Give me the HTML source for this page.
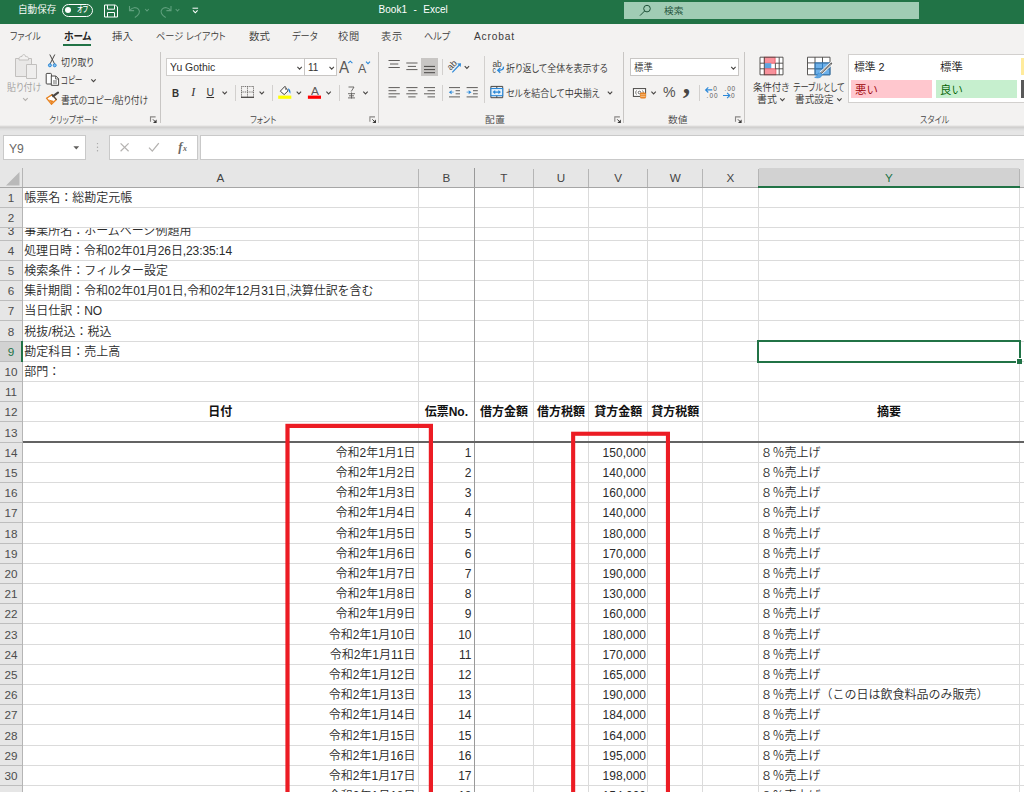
<!DOCTYPE html>
<html lang="ja"><head><meta charset="utf-8"><title>Book1 - Excel</title>
<style>
html,body{margin:0;padding:0}
body{width:1024px;height:792px;overflow:hidden;position:relative;background:#fff;font-family:"Liberation Sans","Noto Sans CJK JP",sans-serif;}
.a{position:absolute}
.t{position:absolute;white-space:nowrap}
.u{font-feature-settings:"palt"}
.g{font-family:"Liberation Sans","Noto Sans CJK JP",sans-serif}
svg{position:absolute;overflow:visible}
</style></head><body>

<div class="a" style="left:0px;top:0px;width:1024px;height:24px;background:#217346;"></div>
<div class="t u" style="left:18.00px;top:2.30px;line-height:16px;font-size:9.7px;color:#fff;font-weight:350;transform:scaleX(0.9884);transform-origin:0 50%;">自動保存</div>
<div class="a" style="left:62px;top:3.5px;width:29px;height:11px;border:1px solid #fff;border-radius:7px"></div>
<div class="a" style="left:65.4px;top:6.8px;width:5.8px;height:5.8px;border-radius:3px;background:#fff"></div>
<div class="t u" style="left:77.30px;top:2.20px;line-height:16px;font-size:8px;color:#fff;font-weight:500;transform:scaleX(0.7689);transform-origin:0 50%;">オフ</div>
<div class="t u" style="top:2.20px;line-height:16px;font-size:10px;color:#fff;left:378.60px;word-spacing:3.7px;">Book1 - Excel</div>
<div class="a" style="left:624px;top:2px;width:295px;height:17px;background:#a0ccb4;"></div>
<div class="t u" style="left:663.50px;top:3.00px;line-height:16px;font-size:9.3px;color:#1f5138;font-weight:350;transform:scaleX(1.0371);transform-origin:0 50%;">検索</div>
<div class="a" style="left:0px;top:24px;width:1024px;height:102px;background:#f3f2f1;"></div>
<div class="t u" style="left:10.00px;top:29.30px;line-height:16px;font-size:10.2px;color:#3b3a39;font-weight:350;transform:scaleX(0.8730);transform-origin:0 50%;">ファイル</div>
<div class="t u" style="left:112.00px;top:29.30px;line-height:16px;font-size:10.2px;color:#3b3a39;font-weight:350;transform:scaleX(1.0209);transform-origin:0 50%;">挿入</div>
<div class="t u" style="left:156.00px;top:29.30px;line-height:16px;font-size:10.2px;color:#3b3a39;font-weight:350;transform:scaleX(0.9012);transform-origin:0 50%;">ページ レイアウト</div>
<div class="t u" style="left:249.00px;top:29.30px;line-height:16px;font-size:10.2px;color:#3b3a39;font-weight:350;transform:scaleX(1.0209);transform-origin:0 50%;">数式</div>
<div class="t u" style="left:291.50px;top:29.30px;line-height:16px;font-size:10.2px;color:#3b3a39;font-weight:350;transform:scaleX(0.9022);transform-origin:0 50%;">データ</div>
<div class="t u" style="left:338.00px;top:29.30px;line-height:16px;font-size:10.2px;color:#3b3a39;font-weight:350;letter-spacing:0.713px;">校閲</div>
<div class="t u" style="left:381.00px;top:29.30px;line-height:16px;font-size:10.2px;color:#3b3a39;font-weight:350;letter-spacing:0.713px;">表示</div>
<div class="t u" style="left:424.00px;top:29.30px;line-height:16px;font-size:10.2px;color:#3b3a39;font-weight:350;transform:scaleX(0.8996);transform-origin:0 50%;">ヘルプ</div>
<div class="t u" style="left:474.00px;top:29.30px;line-height:16px;font-size:10.2px;color:#3b3a39;font-weight:350;letter-spacing:0.813px;">Acrobat</div>
<div class="t u" style="left:63.70px;top:29.30px;line-height:16px;font-size:10.2px;color:#252423;font-weight:700;transform:scaleX(0.9423);transform-origin:0 50%;">ホーム</div>
<div class="a" style="left:63px;top:44px;width:28px;height:2px;background:#217346;"></div>
<div class="a" style="left:0px;top:128px;width:1024px;height:40px;background:#e6e6e6;"></div>
<div class="a" style="left:0px;top:125px;width:1024px;height:1px;background:#eae9e8;"></div>
<div class="a" style="left:0px;top:126px;width:1024px;height:1px;background:#d9d8d7;"></div>
<div class="a" style="left:0px;top:127px;width:1024px;height:1px;background:#d1d0cf;"></div>
<div class="a" style="left:0px;top:128px;width:1024px;height:1px;background:#d8d8d8;"></div>
<div class="a" style="left:0px;top:129px;width:1024px;height:1px;background:#dfdfdf;"></div>
<div class="a" style="left:0px;top:130px;width:1024px;height:1px;background:#e3e3e3;"></div>
<div class="a" style="left:159.5px;top:52px;width:1px;height:71px;background:#c8c6c4;"></div>
<div class="a" style="left:378.0px;top:52px;width:1px;height:71px;background:#c8c6c4;"></div>
<div class="a" style="left:623.0px;top:52px;width:1px;height:71px;background:#c8c6c4;"></div>
<div class="a" style="left:744.0px;top:52px;width:1px;height:71px;background:#c8c6c4;"></div>
<div class="a" style="left:235.0px;top:85px;width:1px;height:16px;background:#d2d0ce;"></div>
<div class="a" style="left:272.0px;top:85px;width:1px;height:16px;background:#d2d0ce;"></div>
<div class="a" style="left:338.5px;top:85px;width:1px;height:16px;background:#d2d0ce;"></div>
<div class="a" style="left:442.0px;top:59px;width:1px;height:16px;background:#d2d0ce;"></div>
<div class="a" style="left:442.0px;top:85px;width:1px;height:16px;background:#d2d0ce;"></div>
<div class="a" style="left:484.0px;top:56px;width:1px;height:47px;background:#d2d0ce;"></div>
<div class="a" style="left:699.0px;top:85px;width:1px;height:16px;background:#d2d0ce;"></div>
<div class="t u" style="left:7.30px;top:80.10px;line-height:16px;font-size:9.8px;color:#a19f9d;font-weight:350;transform:scaleX(0.9246);transform-origin:0 50%;">貼り付け</div>
<div class="t u" style="left:61.40px;top:54.50px;line-height:16px;font-size:9.8px;color:#323130;font-weight:350;transform:scaleX(0.9135);transform-origin:0 50%;">切り取り</div>
<div class="t u" style="left:61.30px;top:73.20px;line-height:16px;font-size:9.8px;color:#323130;font-weight:350;transform:scaleX(0.7657);transform-origin:0 50%;">コピー</div>
<div class="t u" style="left:61.30px;top:93.10px;line-height:16px;font-size:9.8px;color:#323130;font-weight:350;transform:scaleX(0.8975);transform-origin:0 50%;">書式のコピー/貼り付け</div>
<div class="t u" style="left:49.20px;top:111.90px;line-height:16px;font-size:9.6px;color:#444;font-weight:350;transform:scaleX(0.8249);transform-origin:0 50%;">クリップボード</div>
<div class="a" style="left:166px;top:58px;width:137px;height:16px;background:#fff;border:1px solid #cfcdcb"></div>
<div class="a" style="left:304px;top:58px;width:31px;height:16px;background:#fff;border:1px solid #c8c6c4"></div>
<div class="t u" style="left:169.50px;top:60.30px;line-height:16px;font-size:10.2px;color:#323130;font-weight:350;transform:scaleX(1.0255);transform-origin:0 50%;">Yu Gothic</div>
<div class="t u" style="left:308.00px;top:60.30px;line-height:16px;font-size:10.2px;color:#323130;font-weight:350;transform:scaleX(0.9737);transform-origin:0 50%;">11</div>
<div class="t u" style="left:250.00px;top:111.90px;line-height:16px;font-size:9.6px;color:#444;font-weight:350;transform:scaleX(0.8374);transform-origin:0 50%;">フォント</div>
<div class="t u" style="left:172.00px;top:84.70px;line-height:16px;font-size:11px;color:#323130;font-weight:700;transform:scaleX(0.8927);transform-origin:0 50%;">B</div>
<div class="t u" style="top:83.70px;line-height:16px;font-size:12px;color:#323130;left:43.20px;width:300px;text-align:center;font-style:italic;font-family:'Liberation Serif',serif;">I</div>
<div class="t u" style="top:84.00px;line-height:16px;font-size:10.5px;color:#323130;left:60.30px;width:300px;text-align:center;text-decoration:underline;">U</div>
<div class="t u" style="left:339.40px;top:59.90px;line-height:16px;font-size:15.7px;color:#5a5856;font-weight:350;transform:scaleX(0.9648);transform-origin:0 50%;">A</div>
<div class="t u" style="left:358.00px;top:61.00px;line-height:16px;font-size:12.6px;color:#5a5856;font-weight:350;transform:scaleX(0.9874);transform-origin:0 50%;">A</div>
<div class="t u" style="left:310.80px;top:83.10px;line-height:16px;font-size:11.4px;color:#5c5a58;font-weight:350;transform:scaleX(1.0382);transform-origin:0 50%;">A</div>
<div class="a" style="left:421px;top:58px;width:17px;height:18px;background:#c8c6c4;"></div>
<div class="t u" style="left:506.00px;top:60.50px;line-height:16px;font-size:9.8px;color:#323130;font-weight:350;transform:scaleX(0.9202);transform-origin:0 50%;">折り返して全体を表示する</div>
<div class="t u" style="left:506.00px;top:85.70px;line-height:16px;font-size:9.8px;color:#323130;font-weight:350;transform:scaleX(0.9161);transform-origin:0 50%;">セルを結合して中央揃え</div>
<div class="t u" style="left:485.00px;top:111.90px;line-height:16px;font-size:9.6px;color:#444;font-weight:350;letter-spacing:0.556px;">配置</div>
<div class="a" style="left:630px;top:58px;width:107px;height:16px;background:#fff;border:1px solid #c8c6c4"></div>
<div class="t u" style="left:634.00px;top:59.70px;line-height:16px;font-size:9.8px;color:#323130;font-weight:350;transform:scaleX(0.9595);transform-origin:0 50%;">標準</div>
<div class="t u" style="left:662.50px;top:84.30px;line-height:16px;font-size:15.5px;color:#555351;font-weight:350;transform:scaleX(0.9133);transform-origin:0 50%;">%</div>
<div class="t u" style="left:667.75px;top:111.90px;line-height:16px;font-size:9.6px;color:#444;font-weight:350;transform:scaleX(1.0189);transform-origin:0 50%;">数値</div>
<div class="t u" style="left:752.90px;top:79.90px;line-height:16px;font-size:9.8px;color:#323130;font-weight:350;transform:scaleX(0.9617);transform-origin:0 50%;">条件付き</div>
<div class="t u" style="left:757.00px;top:92.20px;line-height:16px;font-size:9.8px;color:#323130;font-weight:350;transform:scaleX(1.0105);transform-origin:0 50%;">書式</div>
<div class="t u" style="left:793.20px;top:79.90px;line-height:16px;font-size:9.8px;color:#323130;font-weight:350;transform:scaleX(0.8412);transform-origin:0 50%;">テーブルとして</div>
<div class="t u" style="left:795.00px;top:92.20px;line-height:16px;font-size:9.8px;color:#323130;font-weight:350;transform:scaleX(0.9850);transform-origin:0 50%;">書式設定</div>
<div class="a" style="left:848px;top:54px;width:178px;height:47px;background:#fff;border:1px solid #d2d0ce"></div>
<div class="t g" style="left:854.00px;top:58.70px;line-height:16px;font-size:11.2px;color:#1a1a1a;font-weight:350;transform:scaleX(0.9608);transform-origin:0 50%;">標準 2</div>
<div class="t g" style="left:940.00px;top:58.70px;line-height:16px;font-size:11.2px;color:#1a1a1a;font-weight:350;transform:scaleX(1.0183);transform-origin:0 50%;">標準</div>
<div class="a" style="left:851px;top:80px;width:81px;height:18px;background:#ffc7ce;"></div>
<div class="a" style="left:936px;top:80px;width:81px;height:18px;background:#c6efce;"></div>
<div class="a" style="left:1021px;top:58px;width:3px;height:17px;background:#ffeb9c;"></div>
<div class="a" style="left:1021px;top:80px;width:3px;height:18px;background:#595959;"></div>
<div class="t g" style="left:855.00px;top:82.00px;line-height:16px;font-size:11.2px;color:#9c0006;font-weight:350;transform:scaleX(1.0183);transform-origin:0 50%;">悪い</div>
<div class="t g" style="left:940.00px;top:82.00px;line-height:16px;font-size:11.2px;color:#006100;font-weight:350;transform:scaleX(1.0183);transform-origin:0 50%;">良い</div>
<div class="t u" style="left:920.00px;top:111.90px;line-height:16px;font-size:9.6px;color:#444;font-weight:350;transform:scaleX(0.8504);transform-origin:0 50%;">スタイル</div>
<div class="a" style="left:3px;top:135px;width:81px;height:23px;background:#fff;border:1px solid #c9c9c9"></div>
<div class="t u" style="left:8.90px;top:141.10px;line-height:16px;font-size:12.6px;color:#6a6866;font-weight:350;transform:scaleX(0.9671);transform-origin:0 50%;">Y9</div>
<div class="a" style="left:109px;top:135px;width:87px;height:23px;background:#fff;border:1px solid #c9c9c9"></div>
<div class="a" style="left:200px;top:135px;width:828px;height:23px;background:#fff;border:1px solid #c9c9c9"></div>
<svg style="left:0;top:0" width="1024" height="170" viewBox="0 0 1024 170"><g fill="none" stroke="#fff" stroke-width="1"><path d="M104.5 5h11l2 2v10h-13z"/><path d="M107.5 5.2v4h7v-4M107.5 17v-4.5h7v4.5"/></g><g fill="none" stroke="#5f9f7d" stroke-width="1.1"><path d="M129.5 6v4.6h4.6"/><path d="M129.8 10.4c2.2-3.2 6.4-3.6 8.6-1.2c2.6 2.8 0.2 6-3.6 8.2"/><path d="M171 6v4.6h-4.6"/><path d="M170.7 10.4c-2.2-3.2-6.4-3.6-8.600-1.2c-2.6 2.8-0.2 6 3.600 8.200"/></g><path d="M145.20 9.00L147.00 11.00L148.80 9.00" fill="none" stroke="#5f9f7d" stroke-width="1.1"/><path d="M175.70 9.00L177.50 11.00L179.30 9.00" fill="none" stroke="#5f9f7d" stroke-width="1.1"/><path d="M192.500 8.200h5.600" stroke="#fff" stroke-width="1"/><path d="M193.00 10.40L195.30 12.80L197.60 10.40" fill="none" stroke="#fff" stroke-width="1.1"/><g fill="none" stroke="#1f5138" stroke-width="1"><circle cx="647" cy="8.600" r="3.300"/><path d="M644.600 11l-4.600 4.600"/></g><g stroke="#c2c0be" stroke-width="1" fill="#e9e8e7"><path d="M15.500 58.500h16v18h-16z"/><path d="M19 58.500c0-1.500 1.500-2 3-2c0-2.500 3.500-2.500 3.500 0c1.500 0 3 0.500 3 2v1.500h-9.500z" fill="#f3f2f1"/><path d="M26.500 64.500h10v14h-10z" fill="#efeeed"/></g><path d="M23.10 98.05L25.40 100.35L27.70 98.05" fill="none" stroke="#b3b0ad" stroke-width="1.1"/><g fill="none" stroke="#484644" stroke-width="1"><path d="M49.800 54.500L54.600 64M54.800 54.500L50 64"/></g><circle cx="49.900" cy="65.300" r="1.500" fill="#8cc4ee" stroke="#2b88d8" stroke-width="1"/><circle cx="54.700" cy="65.300" r="1.500" fill="#8cc4ee" stroke="#2b88d8" stroke-width="1"/><g fill="#fff" stroke="#484644" stroke-width="1"><path d="M51.500 84h-4.500q-0.800 0-0.800-0.800v-9q0-0.800 0.800-0.800h3.600q0.800 0 0.800 0.800v2"/><path d="M51.300 76h4.500l2.800 2.800v6.500h-7.300z"/><path d="M55.600 76v3h3M53 81h4M53 83h4" fill="none" stroke-width="0.800"/></g><path d="M91.30 79.45L93.50 81.75L95.70 79.45" fill="none" stroke="#484644" stroke-width="1.1"/><path d="M46.500 98.200L52.200 94.600L56.400 99.600L51.400 104.200Z" fill="#fff" stroke="#e8821e" stroke-width="1.300" stroke-linejoin="round"/><path d="M48.500 99.500L51.600 103.200L54 101Z" fill="#e8821e"/><path d="M53.200 96.200L58 92.700" stroke="#484644" stroke-width="2.200" stroke-linecap="round"/><path d="M51.800 94.300L56.600 99.800" stroke="#484644" stroke-width="1.200"/><path d="M150.50 121.80V116.90H155.60" fill="none" stroke="#8a8886" stroke-width="1.1"/><path d="M153.00 119.40L155.40 121.80" fill="none" stroke="#3b3a39" stroke-width="1"/><path d="M156.60 119.40V123.00H153.00Z" fill="#3b3a39"/><path d="M297.40 66.85L299.60 69.15L301.80 66.85" fill="none" stroke="#484644" stroke-width="1.1"/><path d="M329.50 66.85L331.70 69.15L333.90 66.85" fill="none" stroke="#484644" stroke-width="1.1"/><path d="M348.200 63.200l2.100-2l2.100 2" fill="none" stroke="#2b88d8" stroke-width="1.100"/><path d="M366 61.700l2 2l2-2" fill="none" stroke="#2b88d8" stroke-width="1.100"/><path d="M222.50 91.55L224.70 93.85L226.90 91.55" fill="none" stroke="#484644" stroke-width="1.1"/><g stroke="#6a6866" stroke-width="1" stroke-dasharray="1 0.800" fill="none"><path d="M241.500 86.500h12M241.500 86.500v11M253.500 86.500v11M247.500 86.500v11M241.500 92h12"/></g><path d="M241 97.300h13" stroke="#484644" stroke-width="1.300"/><path d="M259.60 91.55L261.80 93.85L264.00 91.55" fill="none" stroke="#484644" stroke-width="1.1"/><path d="M280.300 91.200L284.900 86.300L288 90.900L284.200 94.600Z" fill="#fff" stroke="#484644" stroke-width="1" stroke-linejoin="round"/><path d="M285 86.400L286 90" stroke="#8a8886" stroke-width="1.300" fill="none"/><path d="M287.800 88.300C290 88.800 290.900 91 290.300 93.800C289.300 92.600 288.800 91.400 287.800 88.300Z" fill="#1e7fd0"/><rect x="278.200" y="95.600" width="13.100" height="3.200" fill="#ffff00"/><path d="M296.70 91.55L298.90 93.85L301.10 91.55" fill="none" stroke="#484644" stroke-width="1.1"/><rect x="307.900" y="95.600" width="13.100" height="3.200" fill="#ff0000"/><path d="M326.40 91.55L328.60 93.85L330.80 91.55" fill="none" stroke="#484644" stroke-width="1.1"/><g fill="none" stroke="#605e5c" stroke-width="0.900"><path d="M348.500 87h5.500l-2.800 4.500M351 88.500v0"/><path d="M348 93.700h7M349 95.800h5M348 97.900h7M351.500 92.500v6"/></g><path d="M363.30 91.55L365.50 93.85L367.70 91.55" fill="none" stroke="#484644" stroke-width="1.1"/><path d="M369.90 121.80V116.90H375.00" fill="none" stroke="#8a8886" stroke-width="1.1"/><path d="M372.40 119.40L374.80 121.80" fill="none" stroke="#3b3a39" stroke-width="1"/><path d="M376.00 119.40V123.00H372.40Z" fill="#3b3a39"/><path d="M388.50 60.50H399.80" stroke="#605e5c" stroke-width="1.0" fill="none"/><path d="M390.00 64.00H398.30" stroke="#605e5c" stroke-width="1.0" fill="none"/><path d="M388.50 67.50H399.80" stroke="#605e5c" stroke-width="1.0" fill="none"/><path d="M406.30 63.00H417.50" stroke="#605e5c" stroke-width="1.0" fill="none"/><path d="M407.80 66.40H416.00" stroke="#605e5c" stroke-width="1.0" fill="none"/><path d="M406.30 69.60H417.50" stroke="#605e5c" stroke-width="1.0" fill="none"/><path d="M424.00 66.40H435.00" stroke="#484644" stroke-width="1.0" fill="none"/><path d="M424.00 69.60H435.00" stroke="#484644" stroke-width="1.0" fill="none"/><path d="M424.00 72.70H435.00" stroke="#484644" stroke-width="1.0" fill="none"/><path d="M388.50 87.60H399.80" stroke="#605e5c" stroke-width="1.0" fill="none"/><path d="M406.30 87.60H417.50" stroke="#605e5c" stroke-width="1.0" fill="none"/><path d="M424.00 87.60H435.00" stroke="#605e5c" stroke-width="1.0" fill="none"/><path d="M449.00 87.60H460.00" stroke="#605e5c" stroke-width="1.0" fill="none"/><path d="M466.60 87.60H477.80" stroke="#605e5c" stroke-width="1.0" fill="none"/><path d="M388.50 90.70H396.30" stroke="#605e5c" stroke-width="1.0" fill="none"/><path d="M408.20 90.70H415.60" stroke="#605e5c" stroke-width="1.0" fill="none"/><path d="M427.50 90.70H435.00" stroke="#605e5c" stroke-width="1.0" fill="none"/><path d="M455.60 90.70H460.00" stroke="#605e5c" stroke-width="1.0" fill="none"/><path d="M473.00 90.70H477.80" stroke="#605e5c" stroke-width="1.0" fill="none"/><path d="M388.50 93.80H399.80" stroke="#605e5c" stroke-width="1.0" fill="none"/><path d="M406.30 93.80H417.50" stroke="#605e5c" stroke-width="1.0" fill="none"/><path d="M424.00 93.80H435.00" stroke="#605e5c" stroke-width="1.0" fill="none"/><path d="M455.60 93.80H460.00" stroke="#605e5c" stroke-width="1.0" fill="none"/><path d="M473.00 93.80H477.80" stroke="#605e5c" stroke-width="1.0" fill="none"/><path d="M388.50 96.90H396.30" stroke="#605e5c" stroke-width="1.0" fill="none"/><path d="M408.20 96.90H415.60" stroke="#605e5c" stroke-width="1.0" fill="none"/><path d="M427.50 96.90H435.00" stroke="#605e5c" stroke-width="1.0" fill="none"/><path d="M449.00 96.90H460.00" stroke="#605e5c" stroke-width="1.0" fill="none"/><path d="M466.60 96.90H477.80" stroke="#605e5c" stroke-width="1.0" fill="none"/><path d="M448.800 92.150l2.900-2v4z" fill="#2b88d8"/><path d="M451.500 92.150h2.200" stroke="#7db8ea" stroke-width="1.200"/><path d="M471.500 92.150l-2.900-2v4z" fill="#2b88d8"/><path d="M466.600 92.150h2.200" stroke="#7db8ea" stroke-width="1.200"/><path d="M452.300 72.300L459.800 64.500" fill="none" stroke="#2b88d8" stroke-width="1.200"/><path d="M461 63.300l-0.300 3.800l-3.500-3.500z" fill="#2b88d8"/><text x="0" y="0" transform="translate(450.500 70.800) rotate(-45)" font-size="9" fill="#484644" font-family="Liberation Sans, sans-serif">ab</text><path d="M464.70 66.05L466.90 68.35L469.10 66.05" fill="none" stroke="#484644" stroke-width="1.1"/><text x="492.400" y="66.500" font-size="8.600" fill="#484644" font-family="Liberation Sans, sans-serif" textLength="9.400" lengthAdjust="spacingAndGlyphs">ab</text><text x="492.400" y="72.600" font-size="8.600" fill="#484644" font-family="Liberation Sans, sans-serif" textLength="3.400" lengthAdjust="spacingAndGlyphs">c</text><path d="M503.500 66.600c0.300 2.700-1.600 3.700-5.200 3.700" fill="none" stroke="#2b88d8" stroke-width="1.400"/><path d="M500.300 67.900l-2.600 2.400l2.600 2.400" fill="none" stroke="#2b88d8" stroke-width="1.300"/><path d="M490.900 86.400h11.800v11.300h-11.800zM496.800 86.400v11.300" fill="none" stroke="#484644" stroke-width="1"/><rect x="490.900" y="88.500" width="11.800" height="7.200" fill="#e4f1fb" stroke="#2b88d8" stroke-width="1.100"/><path d="M494.500 92.100h4.600" stroke="#2b88d8" stroke-width="1.300" fill="none"/><path d="M492.600 92.100l2.600-2.100v4.200zM501 92.100l-2.600-2.100v4.200z" fill="#2b88d8"/><path d="M607.80 91.55L610.00 93.85L612.20 91.55" fill="none" stroke="#484644" stroke-width="1.1"/><path d="M614.80 121.80V116.90H619.90" fill="none" stroke="#8a8886" stroke-width="1.1"/><path d="M617.30 119.40L619.70 121.80" fill="none" stroke="#3b3a39" stroke-width="1"/><path d="M620.90 119.40V123.00H617.30Z" fill="#3b3a39"/><path d="M731.20 66.85L733.40 69.15L735.60 66.85" fill="none" stroke="#484644" stroke-width="1.1"/><rect x="633.400" y="88.600" width="12.200" height="7.800" fill="#fff" stroke="#484644" stroke-width="1"/><path d="M636.500 90.500c-1 1.200-1 2.800 0 4M642.500 90.500c1 1.200 1 2.800 0 4" stroke="#484644" stroke-width="0.800" fill="none"/><circle cx="639.500" cy="92.500" r="1.300" fill="none" stroke="#484644" stroke-width="0.800"/><rect x="640" y="92.600" width="6" height="6" rx="1.500" fill="#e8821e"/><path d="M640.500 94.800h5M640.500 96.600h5" stroke="#fbd9b5" stroke-width="0.700"/><path d="M651.40 91.55L653.60 93.85L655.80 91.55" fill="none" stroke="#484644" stroke-width="1.1"/><text x="682.800" y="92.800" font-size="30" font-weight="700" fill="#484644" font-family="Liberation Serif, serif">,</text><path d="M705.500 89.900h6.800M708.300 87.300l-2.700 2.600l2.700 2.600" fill="none" stroke="#2b88d8" stroke-width="1.100"/><text x="713.200" y="91.200" font-size="6.500" fill="#605e5c" font-family="Liberation Sans, sans-serif">0</text><text x="706.600" y="97.900" font-size="6.500" fill="#605e5c" font-family="Liberation Sans, sans-serif" textLength="11">.00</text><path d="M723 95.500h6.800M727.100 92.900l2.700 2.600l-2.700 2.600" fill="none" stroke="#2b88d8" stroke-width="1.100"/><text x="724.600" y="91.200" font-size="6.500" fill="#605e5c" font-family="Liberation Sans, sans-serif" textLength="10.500">.00</text><text x="729.300" y="97.900" font-size="6.500" fill="#605e5c" font-family="Liberation Sans, sans-serif">.0</text><path d="M735.50 121.80V116.90H740.60" fill="none" stroke="#8a8886" stroke-width="1.1"/><path d="M738.00 119.40L740.40 121.80" fill="none" stroke="#3b3a39" stroke-width="1"/><path d="M741.60 119.40V123.00H738.00Z" fill="#3b3a39"/><rect x="760" y="57.200" width="23" height="17.600" fill="#fff"/><rect x="764.300" y="57.200" width="10.800" height="6" fill="#f8919b" stroke="#e8505c" stroke-width="0.800"/><rect x="764.300" y="63.200" width="7" height="5.600" fill="#5ea5e0"/><rect x="764.300" y="68.800" width="11.600" height="6" fill="#f8919b" stroke="#e8505c" stroke-width="0.800"/><path d="M760 57.200h23v17.600h-23zM764.300 57.200v17.600M775.400 63.200v5.600M779.200 57.200v17.600M760 63.200h4.300M775.400 63.200h7.600M760 68.800h4.300M775.400 68.800h7.600" fill="none" stroke="#484644" stroke-width="0.900"/><path d="M780.20 98.45L782.40 100.75L784.60 98.45" fill="none" stroke="#484644" stroke-width="1.1"/><rect x="807.500" y="57.200" width="22.500" height="17.600" fill="#fff"/><rect x="815" y="62.900" width="15" height="11.900" fill="#6cb0ea"/><path d="M807.500 57.200h22.500v17.600h-22.500zM815 57.200v17.600M822.500 57.200v17.600M807.500 62.900h22.500M807.500 68.800h22.500" fill="none" stroke="#484644" stroke-width="0.900"/><path d="M815 62.900h15v11.900h-15zM822.500 62.900v11.900M815 68.800h15" fill="none" stroke="#2b88d8" stroke-width="0.800"/><path d="M831.400 63.400L820.800 73.300" stroke="#fff" stroke-width="3.400" stroke-linecap="round"/><path d="M831.400 63.400L820.800 73.300" stroke="#484644" stroke-width="1.700" stroke-linecap="round"/><path d="M831 63.800L821.500 72.600" stroke="#fff" stroke-width="0.600" stroke-linecap="round"/><path d="M814.600 77.300c2-0.500 2.400-1.500 2.800-3c0.600-1.800 3-2 4-0.700c1 1.400 0.300 3-1.400 3.800c-1.700 0.700-3.600 0.600-5.400-0.100z" fill="#5ea5e0" stroke="#2b88d8" stroke-width="0.600"/><path d="M837.20 98.45L839.40 100.75L841.60 98.45" fill="none" stroke="#484644" stroke-width="1.1"/><path d="M73.400 146.300l2.900 3.200l2.900-3.200z" fill="#605e5c"/><g fill="#a6a6a6"><circle cx="97.500" cy="143.600" r="0.700"/><circle cx="97.500" cy="147.200" r="0.700"/><circle cx="97.500" cy="150.800" r="0.700"/></g><path d="M120.600 143.400l8 7.800M128.600 143.400l-8 7.800" stroke="#b4b2b0" stroke-width="1.200" fill="none"/><path d="M149 147.600l3.300 3.500l6.500-8" stroke="#b4b2b0" stroke-width="1.300" fill="none"/><text x="178.200" y="150.800" font-size="12.500" font-style="italic" font-weight="700" fill="#6a6866" font-family="Liberation Serif, serif">f</text><text x="183" y="150.800" font-size="8" font-style="italic" font-weight="700" fill="#6a6866" font-family="Liberation Serif, serif">x</text></svg>
<div class="a" style="left:0px;top:168px;width:1024px;height:20px;background:#e6e6e6;"></div>
<div class="a" style="left:0px;top:188px;width:22px;height:610px;background:#e6e6e6;"></div>
<div class="a" style="left:759px;top:168px;width:260px;height:19px;background:#d2d2d2;"></div>
<div class="a" style="left:0px;top:342px;width:22px;height:19px;background:#d2d2d2;"></div>
<div class="a" style="left:23px;top:207px;width:1001px;height:1px;background:#dbdbdb;"></div>
<div class="a" style="left:0px;top:207px;width:22px;height:1px;background:#bdbdbd;"></div>
<div class="a" style="left:23px;top:227px;width:1001px;height:1px;background:#dbdbdb;"></div>
<div class="a" style="left:0px;top:227px;width:22px;height:1px;background:#bdbdbd;"></div>
<div class="a" style="left:23px;top:240px;width:1001px;height:1px;background:#dbdbdb;"></div>
<div class="a" style="left:0px;top:240px;width:22px;height:1px;background:#bdbdbd;"></div>
<div class="a" style="left:23px;top:260px;width:1001px;height:1px;background:#dbdbdb;"></div>
<div class="a" style="left:0px;top:260px;width:22px;height:1px;background:#bdbdbd;"></div>
<div class="a" style="left:23px;top:280px;width:1001px;height:1px;background:#dbdbdb;"></div>
<div class="a" style="left:0px;top:280px;width:22px;height:1px;background:#bdbdbd;"></div>
<div class="a" style="left:23px;top:300px;width:1001px;height:1px;background:#dbdbdb;"></div>
<div class="a" style="left:0px;top:300px;width:22px;height:1px;background:#bdbdbd;"></div>
<div class="a" style="left:23px;top:320px;width:1001px;height:1px;background:#dbdbdb;"></div>
<div class="a" style="left:0px;top:320px;width:22px;height:1px;background:#bdbdbd;"></div>
<div class="a" style="left:23px;top:341px;width:1001px;height:1px;background:#dbdbdb;"></div>
<div class="a" style="left:0px;top:341px;width:22px;height:1px;background:#bdbdbd;"></div>
<div class="a" style="left:23px;top:361px;width:1001px;height:1px;background:#dbdbdb;"></div>
<div class="a" style="left:0px;top:361px;width:22px;height:1px;background:#bdbdbd;"></div>
<div class="a" style="left:23px;top:381px;width:1001px;height:1px;background:#dbdbdb;"></div>
<div class="a" style="left:0px;top:381px;width:22px;height:1px;background:#bdbdbd;"></div>
<div class="a" style="left:23px;top:401px;width:1001px;height:1px;background:#dbdbdb;"></div>
<div class="a" style="left:0px;top:401px;width:22px;height:1px;background:#bdbdbd;"></div>
<div class="a" style="left:23px;top:421px;width:1001px;height:1px;background:#dbdbdb;"></div>
<div class="a" style="left:0px;top:421px;width:22px;height:1px;background:#bdbdbd;"></div>
<div class="a" style="left:23px;top:462px;width:1001px;height:1px;background:#dbdbdb;"></div>
<div class="a" style="left:0px;top:462px;width:22px;height:1px;background:#bdbdbd;"></div>
<div class="a" style="left:23px;top:482px;width:1001px;height:1px;background:#dbdbdb;"></div>
<div class="a" style="left:0px;top:482px;width:22px;height:1px;background:#bdbdbd;"></div>
<div class="a" style="left:23px;top:502px;width:1001px;height:1px;background:#dbdbdb;"></div>
<div class="a" style="left:0px;top:502px;width:22px;height:1px;background:#bdbdbd;"></div>
<div class="a" style="left:23px;top:522px;width:1001px;height:1px;background:#dbdbdb;"></div>
<div class="a" style="left:0px;top:522px;width:22px;height:1px;background:#bdbdbd;"></div>
<div class="a" style="left:23px;top:543px;width:1001px;height:1px;background:#dbdbdb;"></div>
<div class="a" style="left:0px;top:543px;width:22px;height:1px;background:#bdbdbd;"></div>
<div class="a" style="left:23px;top:563px;width:1001px;height:1px;background:#dbdbdb;"></div>
<div class="a" style="left:0px;top:563px;width:22px;height:1px;background:#bdbdbd;"></div>
<div class="a" style="left:23px;top:583px;width:1001px;height:1px;background:#dbdbdb;"></div>
<div class="a" style="left:0px;top:583px;width:22px;height:1px;background:#bdbdbd;"></div>
<div class="a" style="left:23px;top:603px;width:1001px;height:1px;background:#dbdbdb;"></div>
<div class="a" style="left:0px;top:603px;width:22px;height:1px;background:#bdbdbd;"></div>
<div class="a" style="left:23px;top:623px;width:1001px;height:1px;background:#dbdbdb;"></div>
<div class="a" style="left:0px;top:623px;width:22px;height:1px;background:#bdbdbd;"></div>
<div class="a" style="left:23px;top:644px;width:1001px;height:1px;background:#dbdbdb;"></div>
<div class="a" style="left:0px;top:644px;width:22px;height:1px;background:#bdbdbd;"></div>
<div class="a" style="left:23px;top:664px;width:1001px;height:1px;background:#dbdbdb;"></div>
<div class="a" style="left:0px;top:664px;width:22px;height:1px;background:#bdbdbd;"></div>
<div class="a" style="left:23px;top:684px;width:1001px;height:1px;background:#dbdbdb;"></div>
<div class="a" style="left:0px;top:684px;width:22px;height:1px;background:#bdbdbd;"></div>
<div class="a" style="left:23px;top:704px;width:1001px;height:1px;background:#dbdbdb;"></div>
<div class="a" style="left:0px;top:704px;width:22px;height:1px;background:#bdbdbd;"></div>
<div class="a" style="left:23px;top:724px;width:1001px;height:1px;background:#dbdbdb;"></div>
<div class="a" style="left:0px;top:724px;width:22px;height:1px;background:#bdbdbd;"></div>
<div class="a" style="left:23px;top:745px;width:1001px;height:1px;background:#dbdbdb;"></div>
<div class="a" style="left:0px;top:745px;width:22px;height:1px;background:#bdbdbd;"></div>
<div class="a" style="left:23px;top:765px;width:1001px;height:1px;background:#dbdbdb;"></div>
<div class="a" style="left:0px;top:765px;width:22px;height:1px;background:#bdbdbd;"></div>
<div class="a" style="left:23px;top:785px;width:1001px;height:1px;background:#dbdbdb;"></div>
<div class="a" style="left:0px;top:785px;width:22px;height:1px;background:#bdbdbd;"></div>
<div class="a" style="left:23px;top:805px;width:1001px;height:1px;background:#dbdbdb;"></div>
<div class="a" style="left:0px;top:805px;width:22px;height:1px;background:#bdbdbd;"></div>
<div class="a" style="left:22px;top:168px;width:1px;height:630px;background:#b5b5b5;"></div>
<div class="a" style="left:418px;top:188px;width:1px;height:610px;background:#dbdbdb;"></div>
<div class="a" style="left:418px;top:169px;width:1px;height:19px;background:#b5b5b5;"></div>
<div class="a" style="left:474px;top:168px;width:1px;height:630px;background:#999;"></div>
<div class="a" style="left:533px;top:188px;width:1px;height:610px;background:#dbdbdb;"></div>
<div class="a" style="left:533px;top:169px;width:1px;height:19px;background:#b5b5b5;"></div>
<div class="a" style="left:588px;top:188px;width:1px;height:610px;background:#dbdbdb;"></div>
<div class="a" style="left:588px;top:169px;width:1px;height:19px;background:#b5b5b5;"></div>
<div class="a" style="left:647px;top:188px;width:1px;height:610px;background:#dbdbdb;"></div>
<div class="a" style="left:647px;top:169px;width:1px;height:19px;background:#b5b5b5;"></div>
<div class="a" style="left:702px;top:188px;width:1px;height:610px;background:#dbdbdb;"></div>
<div class="a" style="left:702px;top:169px;width:1px;height:19px;background:#b5b5b5;"></div>
<div class="a" style="left:758px;top:188px;width:1px;height:610px;background:#dbdbdb;"></div>
<div class="a" style="left:758px;top:169px;width:1px;height:19px;background:#b5b5b5;"></div>
<div class="a" style="left:1019px;top:188px;width:1px;height:610px;background:#dbdbdb;"></div>
<div class="a" style="left:1019px;top:169px;width:1px;height:19px;background:#b5b5b5;"></div>
<div class="a" style="left:0px;top:187px;width:1024px;height:1px;background:#a6a6a6;"></div>
<div class="a" style="left:758px;top:186px;width:262px;height:2px;background:#217346;"></div>
<div class="a" style="left:21px;top:341px;width:2px;height:21px;background:#217346;"></div>
<div class="a" style="left:23px;top:441px;width:1001px;height:2px;background:#636363;"></div>
<div class="a" style="left:0px;top:442px;width:22px;height:1px;background:#bdbdbd;"></div>
<svg style="left:5px;top:171px" width="15" height="15" viewBox="0 0 15 15"><path d="M14.500 1V14.500H1Z" fill="#b9b9b9"/></svg>
<div class="t g" style="top:170.30px;line-height:16px;font-size:11.7px;color:#444;font-weight:350;left:70.30px;width:300px;text-align:center;">A</div>
<div class="t g" style="top:170.30px;line-height:16px;font-size:11.7px;color:#444;font-weight:350;left:296.35px;width:300px;text-align:center;">B</div>
<div class="t g" style="top:170.30px;line-height:16px;font-size:11.7px;color:#444;font-weight:350;left:353.90px;width:300px;text-align:center;">T</div>
<div class="t g" style="top:170.30px;line-height:16px;font-size:11.7px;color:#444;font-weight:350;left:411.10px;width:300px;text-align:center;">U</div>
<div class="t g" style="top:170.30px;line-height:16px;font-size:11.7px;color:#444;font-weight:350;left:468.15px;width:300px;text-align:center;">V</div>
<div class="t g" style="top:170.30px;line-height:16px;font-size:11.7px;color:#444;font-weight:350;left:525.20px;width:300px;text-align:center;">W</div>
<div class="t g" style="top:170.30px;line-height:16px;font-size:11.7px;color:#444;font-weight:350;left:580.45px;width:300px;text-align:center;">X</div>
<div class="t g" style="top:170.30px;line-height:16px;font-size:11.7px;color:#217346;font-weight:350;left:738.85px;width:300px;text-align:center;">Y</div>
<div class="t g" style="top:189.70px;line-height:16px;font-size:11.7px;color:#4d4d4d;font-weight:350;left:-139.00px;width:300px;text-align:center;">1</div>
<div class="t g" style="top:209.90px;line-height:16px;font-size:11.7px;color:#4d4d4d;font-weight:350;left:-139.00px;width:300px;text-align:center;">2</div>
<div class="a" style="left:0;top:228px;width:22px;height:12px;overflow:hidden"><div class="t g" style="left:0;width:22px;text-align:center;top:-4.6px;line-height:16px;font-weight:350;font-size:11.7px;color:#444">3</div></div>
<div class="t g" style="top:242.70px;line-height:16px;font-size:11.7px;color:#4d4d4d;font-weight:350;left:-139.00px;width:300px;text-align:center;">4</div>
<div class="t g" style="top:262.90px;line-height:16px;font-size:11.7px;color:#4d4d4d;font-weight:350;left:-139.00px;width:300px;text-align:center;">5</div>
<div class="t g" style="top:283.10px;line-height:16px;font-size:11.7px;color:#4d4d4d;font-weight:350;left:-139.00px;width:300px;text-align:center;">6</div>
<div class="t g" style="top:303.30px;line-height:16px;font-size:11.7px;color:#4d4d4d;font-weight:350;left:-139.00px;width:300px;text-align:center;">7</div>
<div class="t g" style="top:323.50px;line-height:16px;font-size:11.7px;color:#4d4d4d;font-weight:350;left:-139.00px;width:300px;text-align:center;">8</div>
<div class="t g" style="top:343.70px;line-height:16px;font-size:11.7px;color:#217346;font-weight:350;left:-139.00px;width:300px;text-align:center;">9</div>
<div class="t g" style="top:363.90px;line-height:16px;font-size:11.7px;color:#4d4d4d;font-weight:350;left:-139.00px;width:300px;text-align:center;">10</div>
<div class="t g" style="top:384.10px;line-height:16px;font-size:11.7px;color:#4d4d4d;font-weight:350;left:-139.00px;width:300px;text-align:center;">11</div>
<div class="t g" style="top:404.30px;line-height:16px;font-size:11.7px;color:#4d4d4d;font-weight:350;left:-139.00px;width:300px;text-align:center;">12</div>
<div class="t g" style="top:424.50px;line-height:16px;font-size:11.7px;color:#4d4d4d;font-weight:350;left:-139.00px;width:300px;text-align:center;">13</div>
<div class="t g" style="top:444.70px;line-height:16px;font-size:11.7px;color:#4d4d4d;font-weight:350;left:-139.00px;width:300px;text-align:center;">14</div>
<div class="t g" style="top:464.90px;line-height:16px;font-size:11.7px;color:#4d4d4d;font-weight:350;left:-139.00px;width:300px;text-align:center;">15</div>
<div class="t g" style="top:485.10px;line-height:16px;font-size:11.7px;color:#4d4d4d;font-weight:350;left:-139.00px;width:300px;text-align:center;">16</div>
<div class="t g" style="top:505.30px;line-height:16px;font-size:11.7px;color:#4d4d4d;font-weight:350;left:-139.00px;width:300px;text-align:center;">17</div>
<div class="t g" style="top:525.50px;line-height:16px;font-size:11.7px;color:#4d4d4d;font-weight:350;left:-139.00px;width:300px;text-align:center;">18</div>
<div class="t g" style="top:545.70px;line-height:16px;font-size:11.7px;color:#4d4d4d;font-weight:350;left:-139.00px;width:300px;text-align:center;">19</div>
<div class="t g" style="top:565.90px;line-height:16px;font-size:11.7px;color:#4d4d4d;font-weight:350;left:-139.00px;width:300px;text-align:center;">20</div>
<div class="t g" style="top:586.10px;line-height:16px;font-size:11.7px;color:#4d4d4d;font-weight:350;left:-139.00px;width:300px;text-align:center;">21</div>
<div class="t g" style="top:606.30px;line-height:16px;font-size:11.7px;color:#4d4d4d;font-weight:350;left:-139.00px;width:300px;text-align:center;">22</div>
<div class="t g" style="top:626.50px;line-height:16px;font-size:11.7px;color:#4d4d4d;font-weight:350;left:-139.00px;width:300px;text-align:center;">23</div>
<div class="t g" style="top:646.70px;line-height:16px;font-size:11.7px;color:#4d4d4d;font-weight:350;left:-139.00px;width:300px;text-align:center;">24</div>
<div class="t g" style="top:666.90px;line-height:16px;font-size:11.7px;color:#4d4d4d;font-weight:350;left:-139.00px;width:300px;text-align:center;">25</div>
<div class="t g" style="top:687.10px;line-height:16px;font-size:11.7px;color:#4d4d4d;font-weight:350;left:-139.00px;width:300px;text-align:center;">26</div>
<div class="t g" style="top:707.30px;line-height:16px;font-size:11.7px;color:#4d4d4d;font-weight:350;left:-139.00px;width:300px;text-align:center;">27</div>
<div class="t g" style="top:727.50px;line-height:16px;font-size:11.7px;color:#4d4d4d;font-weight:350;left:-139.00px;width:300px;text-align:center;">28</div>
<div class="t g" style="top:747.70px;line-height:16px;font-size:11.7px;color:#4d4d4d;font-weight:350;left:-139.00px;width:300px;text-align:center;">29</div>
<div class="t g" style="top:767.90px;line-height:16px;font-size:11.7px;color:#4d4d4d;font-weight:350;left:-139.00px;width:300px;text-align:center;">30</div>
<div class="t g" style="top:788.10px;line-height:16px;font-size:11.7px;color:#4d4d4d;font-weight:350;left:-139.00px;width:300px;text-align:center;">31</div>
<div class="t g" style="top:189.70px;line-height:16px;font-size:12px;color:#2b2b2b;font-weight:350;left:24.20px;">帳票名：総勘定元帳</div>
<div class="t g" style="top:242.70px;line-height:16px;font-size:12px;color:#2b2b2b;font-weight:350;letter-spacing:-0.09px;left:24.20px;">処理日時：令和02年01月26日,23:35:14</div>
<div class="t g" style="top:262.90px;line-height:16px;font-size:12px;color:#2b2b2b;font-weight:350;left:24.20px;">検索条件：フィルター設定</div>
<div class="t g" style="top:283.10px;line-height:16px;font-size:12px;color:#2b2b2b;font-weight:350;letter-spacing:-0.04px;left:24.20px;">集計期間：令和02年01月01日,令和02年12月31日,決算仕訳を含む</div>
<div class="t g" style="top:303.30px;line-height:16px;font-size:12px;color:#2b2b2b;font-weight:350;left:24.20px;">当日仕訳：NO</div>
<div class="t g" style="top:323.50px;line-height:16px;font-size:12px;color:#2b2b2b;font-weight:350;left:24.20px;">税抜/税込：税込</div>
<div class="t g" style="top:343.70px;line-height:16px;font-size:12px;color:#2b2b2b;font-weight:350;left:24.20px;">勘定科目：売上高</div>
<div class="t g" style="top:363.90px;line-height:16px;font-size:12px;color:#2b2b2b;font-weight:350;left:24.20px;">部門：</div>
<div class="a" style="left:23px;top:228px;width:390px;height:12px;overflow:hidden"><div class="t g" style="left:1.2px;top:-4.6px;line-height:16px;font-weight:350;font-size:12px;color:#2b2b2b">事業所名：ホームページ例題用</div></div>
<div class="t g" style="top:404.30px;line-height:16px;font-size:12px;color:#111;font-weight:700;left:70.30px;width:300px;text-align:center;">日付</div>
<div class="t g" style="top:404.30px;line-height:16px;font-size:12px;color:#111;font-weight:700;left:296.35px;width:300px;text-align:center;">伝票No.</div>
<div class="t g" style="top:404.30px;line-height:16px;font-size:12px;color:#111;font-weight:700;left:353.90px;width:300px;text-align:center;">借方金額</div>
<div class="t g" style="top:404.30px;line-height:16px;font-size:12px;color:#111;font-weight:700;left:411.10px;width:300px;text-align:center;">借方税額</div>
<div class="t g" style="top:404.30px;line-height:16px;font-size:12px;color:#111;font-weight:700;left:468.15px;width:300px;text-align:center;">貸方金額</div>
<div class="t g" style="top:404.30px;line-height:16px;font-size:12px;color:#111;font-weight:700;left:525.20px;width:300px;text-align:center;">貸方税額</div>
<div class="t g" style="top:404.30px;line-height:16px;font-size:12px;color:#111;font-weight:700;left:739.00px;width:300px;text-align:center;">摘要</div>
<div class="t g" style="top:444.70px;line-height:16px;font-size:12px;color:#2b2b2b;font-weight:350;right:608.50px;">令和2年1月1日</div>
<div class="t g" style="top:444.70px;line-height:16px;font-size:12px;color:#2b2b2b;font-weight:350;right:552.50px;">1</div>
<div class="t g" style="top:444.70px;line-height:16px;font-size:12px;color:#2b2b2b;font-weight:350;right:378.00px;">150,000</div>
<div class="t g" style="top:444.70px;line-height:16px;font-size:12px;color:#2b2b2b;font-weight:350;left:760.40px;">８％売上げ</div>
<div class="t g" style="top:464.90px;line-height:16px;font-size:12px;color:#2b2b2b;font-weight:350;right:608.50px;">令和2年1月2日</div>
<div class="t g" style="top:464.90px;line-height:16px;font-size:12px;color:#2b2b2b;font-weight:350;right:552.50px;">2</div>
<div class="t g" style="top:464.90px;line-height:16px;font-size:12px;color:#2b2b2b;font-weight:350;right:378.00px;">140,000</div>
<div class="t g" style="top:464.90px;line-height:16px;font-size:12px;color:#2b2b2b;font-weight:350;left:760.40px;">８％売上げ</div>
<div class="t g" style="top:485.10px;line-height:16px;font-size:12px;color:#2b2b2b;font-weight:350;right:608.50px;">令和2年1月3日</div>
<div class="t g" style="top:485.10px;line-height:16px;font-size:12px;color:#2b2b2b;font-weight:350;right:552.50px;">3</div>
<div class="t g" style="top:485.10px;line-height:16px;font-size:12px;color:#2b2b2b;font-weight:350;right:378.00px;">160,000</div>
<div class="t g" style="top:485.10px;line-height:16px;font-size:12px;color:#2b2b2b;font-weight:350;left:760.40px;">８％売上げ</div>
<div class="t g" style="top:505.30px;line-height:16px;font-size:12px;color:#2b2b2b;font-weight:350;right:608.50px;">令和2年1月4日</div>
<div class="t g" style="top:505.30px;line-height:16px;font-size:12px;color:#2b2b2b;font-weight:350;right:552.50px;">4</div>
<div class="t g" style="top:505.30px;line-height:16px;font-size:12px;color:#2b2b2b;font-weight:350;right:378.00px;">140,000</div>
<div class="t g" style="top:505.30px;line-height:16px;font-size:12px;color:#2b2b2b;font-weight:350;left:760.40px;">８％売上げ</div>
<div class="t g" style="top:525.50px;line-height:16px;font-size:12px;color:#2b2b2b;font-weight:350;right:608.50px;">令和2年1月5日</div>
<div class="t g" style="top:525.50px;line-height:16px;font-size:12px;color:#2b2b2b;font-weight:350;right:552.50px;">5</div>
<div class="t g" style="top:525.50px;line-height:16px;font-size:12px;color:#2b2b2b;font-weight:350;right:378.00px;">180,000</div>
<div class="t g" style="top:525.50px;line-height:16px;font-size:12px;color:#2b2b2b;font-weight:350;left:760.40px;">８％売上げ</div>
<div class="t g" style="top:545.70px;line-height:16px;font-size:12px;color:#2b2b2b;font-weight:350;right:608.50px;">令和2年1月6日</div>
<div class="t g" style="top:545.70px;line-height:16px;font-size:12px;color:#2b2b2b;font-weight:350;right:552.50px;">6</div>
<div class="t g" style="top:545.70px;line-height:16px;font-size:12px;color:#2b2b2b;font-weight:350;right:378.00px;">170,000</div>
<div class="t g" style="top:545.70px;line-height:16px;font-size:12px;color:#2b2b2b;font-weight:350;left:760.40px;">８％売上げ</div>
<div class="t g" style="top:565.90px;line-height:16px;font-size:12px;color:#2b2b2b;font-weight:350;right:608.50px;">令和2年1月7日</div>
<div class="t g" style="top:565.90px;line-height:16px;font-size:12px;color:#2b2b2b;font-weight:350;right:552.50px;">7</div>
<div class="t g" style="top:565.90px;line-height:16px;font-size:12px;color:#2b2b2b;font-weight:350;right:378.00px;">190,000</div>
<div class="t g" style="top:565.90px;line-height:16px;font-size:12px;color:#2b2b2b;font-weight:350;left:760.40px;">８％売上げ</div>
<div class="t g" style="top:586.10px;line-height:16px;font-size:12px;color:#2b2b2b;font-weight:350;right:608.50px;">令和2年1月8日</div>
<div class="t g" style="top:586.10px;line-height:16px;font-size:12px;color:#2b2b2b;font-weight:350;right:552.50px;">8</div>
<div class="t g" style="top:586.10px;line-height:16px;font-size:12px;color:#2b2b2b;font-weight:350;right:378.00px;">130,000</div>
<div class="t g" style="top:586.10px;line-height:16px;font-size:12px;color:#2b2b2b;font-weight:350;left:760.40px;">８％売上げ</div>
<div class="t g" style="top:606.30px;line-height:16px;font-size:12px;color:#2b2b2b;font-weight:350;right:608.50px;">令和2年1月9日</div>
<div class="t g" style="top:606.30px;line-height:16px;font-size:12px;color:#2b2b2b;font-weight:350;right:552.50px;">9</div>
<div class="t g" style="top:606.30px;line-height:16px;font-size:12px;color:#2b2b2b;font-weight:350;right:378.00px;">160,000</div>
<div class="t g" style="top:606.30px;line-height:16px;font-size:12px;color:#2b2b2b;font-weight:350;left:760.40px;">８％売上げ</div>
<div class="t g" style="top:626.50px;line-height:16px;font-size:12px;color:#2b2b2b;font-weight:350;right:608.50px;">令和2年1月10日</div>
<div class="t g" style="top:626.50px;line-height:16px;font-size:12px;color:#2b2b2b;font-weight:350;right:552.50px;">10</div>
<div class="t g" style="top:626.50px;line-height:16px;font-size:12px;color:#2b2b2b;font-weight:350;right:378.00px;">180,000</div>
<div class="t g" style="top:626.50px;line-height:16px;font-size:12px;color:#2b2b2b;font-weight:350;left:760.40px;">８％売上げ</div>
<div class="t g" style="top:646.70px;line-height:16px;font-size:12px;color:#2b2b2b;font-weight:350;right:608.50px;">令和2年1月11日</div>
<div class="t g" style="top:646.70px;line-height:16px;font-size:12px;color:#2b2b2b;font-weight:350;right:552.50px;">11</div>
<div class="t g" style="top:646.70px;line-height:16px;font-size:12px;color:#2b2b2b;font-weight:350;right:378.00px;">170,000</div>
<div class="t g" style="top:646.70px;line-height:16px;font-size:12px;color:#2b2b2b;font-weight:350;left:760.40px;">８％売上げ</div>
<div class="t g" style="top:666.90px;line-height:16px;font-size:12px;color:#2b2b2b;font-weight:350;right:608.50px;">令和2年1月12日</div>
<div class="t g" style="top:666.90px;line-height:16px;font-size:12px;color:#2b2b2b;font-weight:350;right:552.50px;">12</div>
<div class="t g" style="top:666.90px;line-height:16px;font-size:12px;color:#2b2b2b;font-weight:350;right:378.00px;">165,000</div>
<div class="t g" style="top:666.90px;line-height:16px;font-size:12px;color:#2b2b2b;font-weight:350;left:760.40px;">８％売上げ</div>
<div class="t g" style="top:687.10px;line-height:16px;font-size:12px;color:#2b2b2b;font-weight:350;right:608.50px;">令和2年1月13日</div>
<div class="t g" style="top:687.10px;line-height:16px;font-size:12px;color:#2b2b2b;font-weight:350;right:552.50px;">13</div>
<div class="t g" style="top:687.10px;line-height:16px;font-size:12px;color:#2b2b2b;font-weight:350;right:378.00px;">190,000</div>
<div class="t g" style="top:687.10px;line-height:16px;font-size:12px;color:#2b2b2b;font-weight:350;left:760.40px;">８％売上げ（この日は飲食料品のみ販売）</div>
<div class="t g" style="top:707.30px;line-height:16px;font-size:12px;color:#2b2b2b;font-weight:350;right:608.50px;">令和2年1月14日</div>
<div class="t g" style="top:707.30px;line-height:16px;font-size:12px;color:#2b2b2b;font-weight:350;right:552.50px;">14</div>
<div class="t g" style="top:707.30px;line-height:16px;font-size:12px;color:#2b2b2b;font-weight:350;right:378.00px;">184,000</div>
<div class="t g" style="top:707.30px;line-height:16px;font-size:12px;color:#2b2b2b;font-weight:350;left:760.40px;">８％売上げ</div>
<div class="t g" style="top:727.50px;line-height:16px;font-size:12px;color:#2b2b2b;font-weight:350;right:608.50px;">令和2年1月15日</div>
<div class="t g" style="top:727.50px;line-height:16px;font-size:12px;color:#2b2b2b;font-weight:350;right:552.50px;">15</div>
<div class="t g" style="top:727.50px;line-height:16px;font-size:12px;color:#2b2b2b;font-weight:350;right:378.00px;">164,000</div>
<div class="t g" style="top:727.50px;line-height:16px;font-size:12px;color:#2b2b2b;font-weight:350;left:760.40px;">８％売上げ</div>
<div class="t g" style="top:747.70px;line-height:16px;font-size:12px;color:#2b2b2b;font-weight:350;right:608.50px;">令和2年1月16日</div>
<div class="t g" style="top:747.70px;line-height:16px;font-size:12px;color:#2b2b2b;font-weight:350;right:552.50px;">16</div>
<div class="t g" style="top:747.70px;line-height:16px;font-size:12px;color:#2b2b2b;font-weight:350;right:378.00px;">195,000</div>
<div class="t g" style="top:747.70px;line-height:16px;font-size:12px;color:#2b2b2b;font-weight:350;left:760.40px;">８％売上げ</div>
<div class="t g" style="top:767.90px;line-height:16px;font-size:12px;color:#2b2b2b;font-weight:350;right:608.50px;">令和2年1月17日</div>
<div class="t g" style="top:767.90px;line-height:16px;font-size:12px;color:#2b2b2b;font-weight:350;right:552.50px;">17</div>
<div class="t g" style="top:767.90px;line-height:16px;font-size:12px;color:#2b2b2b;font-weight:350;right:378.00px;">198,000</div>
<div class="t g" style="top:767.90px;line-height:16px;font-size:12px;color:#2b2b2b;font-weight:350;left:760.40px;">８％売上げ</div>
<div class="t g" style="top:788.10px;line-height:16px;font-size:12px;color:#2b2b2b;font-weight:350;right:608.50px;">令和2年1月18日</div>
<div class="t g" style="top:788.10px;line-height:16px;font-size:12px;color:#2b2b2b;font-weight:350;right:552.50px;">18</div>
<div class="t g" style="top:788.10px;line-height:16px;font-size:12px;color:#2b2b2b;font-weight:350;right:378.00px;">154,000</div>
<div class="t g" style="top:788.10px;line-height:16px;font-size:12px;color:#2b2b2b;font-weight:350;left:760.40px;">８％売上げ</div>
<div class="a" style="left:757px;top:340px;width:260px;height:19px;border:2px solid #217346"></div>
<div class="a" style="left:1016px;top:358px;width:6px;height:6px;background:#fff;"></div>
<div class="a" style="left:1017px;top:359px;width:5px;height:5px;background:#217346;"></div>
<svg style="left:0;top:400px" width="1024" height="392" viewBox="0 400 1024 392"><rect x="287.500" y="425.900" width="143.400" height="420" fill="none" stroke="#ec1c24" stroke-width="4.200"/><rect x="573.150" y="433.750" width="94.800" height="420" fill="none" stroke="#ec1c24" stroke-width="4.100"/></svg>
</body></html>
